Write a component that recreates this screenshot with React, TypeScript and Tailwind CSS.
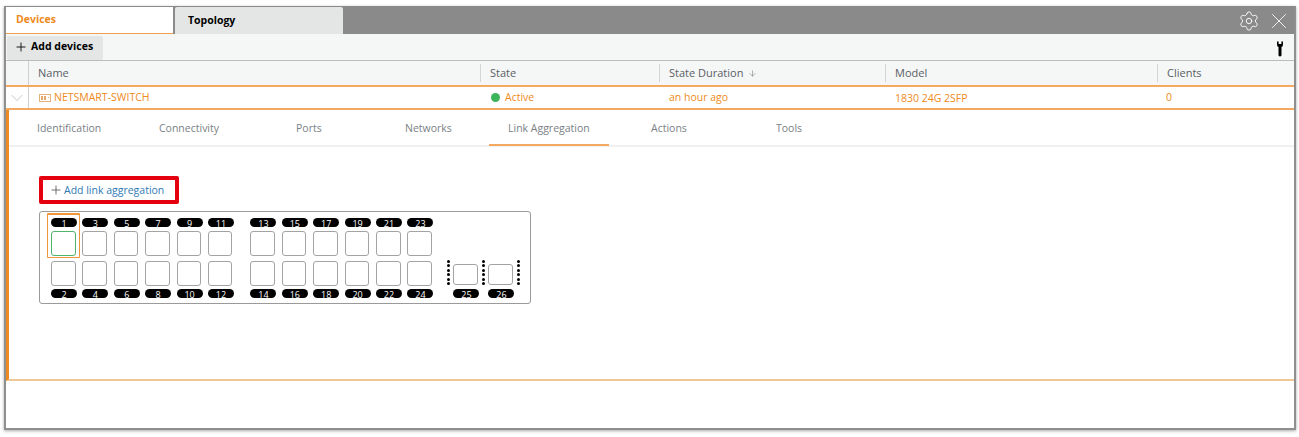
import React from "react";
import { ArrowDown, ChevronDown, Plus, Settings, X } from "lucide-react";

const topRow = [
  ["1", "3", "5", "7", "9", "11"],
  ["13", "15", "17", "19", "21", "23"],
];
const bottomRow = [
  ["2", "4", "6", "8", "10", "12"],
  ["14", "16", "18", "20", "22", "24"],
];

const detailTabs = [
  { label: "Identification", width: "w-[122px]" },
  { label: "Connectivity", width: "w-[137px]" },
  { label: "Ports", width: "w-[109px]" },
  { label: "Networks", width: "w-[103px]" },
  { label: "Link Aggregation", width: "w-[143px]", active: true },
  { label: "Actions", width: "w-[125px]" },
  { label: "Tools", width: "w-[100px]" },
];

const PortLabel: React.FC<{ n: string }> = ({ n }) => (
  <div className="w-[26px] h-[9px] rounded-full bg-black text-white text-[9px] leading-[11px] text-center mx-auto">
    {n}
  </div>
);

const PortBox: React.FC<{ up?: boolean }> = ({ up }) => (
  <div className={up ? "w-[24.5px] h-[25px] rounded-[3px] border border-[#4fb56a]" : "w-[24.5px] h-[25px] rounded-[3px] border border-[#a3a3a3]"} />
);

const Dots = () => (
  <div className="flex flex-col justify-between h-[25px] w-[3px]">
    {[0, 1, 2, 3, 4, 5].map((i) => (
      <div key={i} className="w-[3px] h-[3px] rounded-full bg-black" />
    ))}
  </div>
);

const SwitchPanel = () => (
  <div className="relative w-[492px] h-[93px] ml-[39px] mt-[7px] border border-[#9a9a9a] rounded-[3px]">
    <div className="absolute left-[7px] top-[1px] w-[33px] h-[45px] border border-t-2 border-[#f0973a] rounded-[1px]" />
    <div className="flex pl-[11px] pt-[6px]">
      <div className="flex flex-col">
        <div className="flex gap-[18px]">
          {topRow.map((group, g) => (
            <div key={g} className="flex gap-[6.9px]">
              {group.map((n) => (
                <div key={n} className="flex flex-col gap-[4px] w-[24.5px]">
                  <PortLabel n={n} />
                  <PortBox up={n === "1"} />
                </div>
              ))}
            </div>
          ))}
        </div>
        <div className="flex gap-[18px] mt-[5px]">
          {bottomRow.map((group, g) => (
            <div key={g} className="flex gap-[6.9px]">
              {group.map((n) => (
                <div key={n} className="flex flex-col gap-[3px] w-[24.5px]">
                  <PortBox />
                  <PortLabel n={n} />
                </div>
              ))}
            </div>
          ))}
        </div>
      </div>
      <div className="flex gap-[3.5px] ml-[15px] mt-[42px]">
        <Dots />
        {["25", "26"].map((n) => (
          <div key={n} className="flex gap-[3.5px]">
            <div className="flex flex-col gap-[4px] w-[25px] pt-[4px]">
              <div className="w-[25px] h-[21px] rounded-[3px] border border-[#a3a3a3]" />
              <PortLabel n={n} />
            </div>
            <Dots />
          </div>
        ))}
      </div>
    </div>
  </div>
);

export default function App() {
  return (
    <div className="w-[1299px] h-[437px] bg-white pl-[4px] pt-[6px] font-['Open_Sans',sans-serif] text-[10.5px] overflow-hidden">
      <div className="w-[1292px] h-[424px] flex flex-col bg-white border-l-2 border-r-2 border-b-2 border-[#8f8f8f] shadow-[0_1px_3px_rgba(0,0,0,0.35)]">
        <div className="h-[28px] flex bg-[#8a8a8a] items-stretch">
          <div className="w-[167px] mt-[1px] bg-white border-b border-[#f0a04b] pl-[10px] flex items-center font-bold text-[#ee8a22]">
            Devices
          </div>
          <div className="w-[168px] mt-[1px] ml-[2px] rounded-t-[2px] bg-[#e4e6e6] pl-[13px] flex items-center font-bold text-black">
            Topology
          </div>
          <div className="flex-1 flex items-center justify-end gap-[6px] pr-[2px] pt-[2px] text-white">
            <Settings size={22} strokeWidth={1} />
            <X size={26} strokeWidth={0.8} />
          </div>
        </div>
        <div className="h-[26px] flex items-end justify-between bg-[#f5f6f6] pl-[1px] pr-[11px]">
          <div className="w-[96px] h-[24px] rounded-[2px] bg-[#e4e6e6] flex items-center pl-[7px] pb-[3px] gap-[3px] font-bold text-black">
            <Plus size={14} strokeWidth={1.5} />
            Add devices
          </div>
          <svg width="6" height="16" viewBox="0 0 6 16" className="mb-[3px]">
            <path d="M0 0.5 L0 3.5 Q0 5.5 1.5 6 L1.5 14.5 Q3 16.5 4.5 14.5 L4.5 6 Q6 5.5 6 3.5 L6 0.5 L4.4 0.5 L4.4 3 L1.6 3 L1.6 0.5 Z" fill="#000" />
          </svg>
        </div>
        <div className="h-[27px] flex items-center bg-[#f5f6f6] border-t border-[#bcbcbc] border-b-2 border-b-[#f3a95f] text-[11px] text-[#5a5f66]">
          <div className="w-[23px] h-full border-r border-[#cfcfcf]" />
          <div className="w-[451px] pl-[9px] h-full flex items-center">Name</div>
          <div className="w-[179px] pl-[9px] h-[18px] flex items-center border-l border-[#d5d5d5]">State</div>
          <div className="w-[226px] pl-[9px] h-[18px] flex items-center gap-[5px] border-l border-[#d5d5d5]">
            State Duration
            <ArrowDown size={9} strokeWidth={1.5} className="text-[#777]" />
          </div>
          <div className="w-[272px] pl-[9px] h-[18px] flex items-center border-l border-[#d5d5d5]">Model</div>
          <div className="flex-1 pl-[9px] h-[18px] flex items-center border-l border-[#d5d5d5]">Clients</div>
        </div>
        <div className="h-[23px] flex items-center bg-white border-b-2 border-[#f3a95f] text-[#ee8a22]">
          <div className="w-[23px] h-full flex items-center justify-center border-r border-[#cfcfcf] text-[#a8a8a8]">
            <ChevronDown size={20} strokeWidth={0.8} />
          </div>
          <div className="w-[451px] pl-[10px] flex items-center gap-[3px]">
            <svg width="12" height="8" viewBox="0 0 12 8" fill="none">
              <rect x="0.5" y="0.5" width="11" height="7" stroke="#e5b27c" />
              <rect x="2" y="2" width="2" height="4" fill="#e5a869" />
              <rect x="5" y="2" width="2" height="4" fill="#e5a869" />
              <rect x="9" y="3" width="1" height="1" fill="#e5a869" />
            </svg>
            NETSMART-SWITCH
          </div>
          <div className="w-[179px] pl-[11px] flex items-center gap-[5px]">
            <span className="w-[9px] h-[9px] rounded-full bg-[#3cb55a]" />
            Active
          </div>
          <div className="w-[226px] pl-[10px]">an hour ago</div>
          <div className="w-[272px] pl-[10px] pt-[2px]">1830 24G 2SFP</div>
          <div className="flex-1 pl-[9px]">0</div>
        </div>
        <div className="h-[271px] flex flex-col border-l-[3px] border-[#ee8a22] border-b-2 border-b-[#f0c898]">
          <div className="h-[37px] flex border-b-2 border-[#f0f0f0] pl-[9px] text-[#7a7f85]">
            {detailTabs.map((t) => (
              <div key={t.label} className={`${t.width} h-[36px] flex items-center`}>
                <div className={`h-full flex items-center px-[19px] border-b-2 ${t.active ? "border-[#f3a95f]" : "border-transparent"}`}>
                  <span className="pt-[4px]">{t.label}</span>
                </div>
              </div>
            ))}
          </div>
          <div className="ml-[-9px] pt-[29px]">
            <div className="ml-[39px] w-[140px] h-[28px] border-[4px] border-[#e4000f] rounded-[2px] flex items-center pl-[6px] gap-[0px] text-[#2f7ab5]">
              <Plus size={14} strokeWidth={1.2} className="text-[#333] mr-[1px]" />
              <span className="pt-[2px]">Add link aggregation</span>
            </div>
            <SwitchPanel />
          </div>
        </div>
        <div className="flex-1 bg-white" />
      </div>
    </div>
  );
}
